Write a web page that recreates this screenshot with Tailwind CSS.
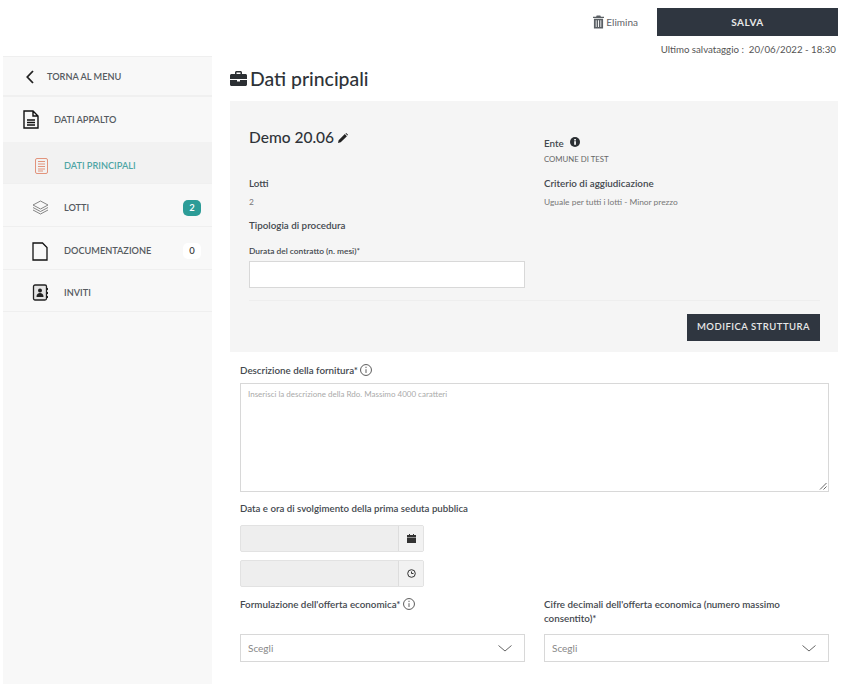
<!DOCTYPE html>
<html lang="it">
<head>
    <meta charset="UTF-8">
    <meta name="viewport" content="width=device-width, initial-scale=1.0">
    <script src="https://cdn.jsdelivr.net/npm/@tailwindcss/browser@4"></script>
    <title>Dati principali</title>
</head>
<body class="bg-white font-['Lato',sans-serif] text-[#3a3f45] h-[684px] overflow-hidden">
    <header class="h-[56px] relative">
        <div class="flex justify-end items-center pt-2 pr-2">
            <div class="flex items-center gap-[2px] mr-[19px] text-[10px] text-[#5f6368]">
                <svg class="w-[11px] h-[14px]" viewBox="0 0 12 14" fill="#5a5f64"><path d="M4 0h4l.6 1.400H12v1.200H0V1.400h3.400zM1 3.400h10V14H1zM3 5v7.500h.9V5zm2.500 0v7.500h1V5zM8.100 5v7.500H9V5z" fill-rule="evenodd"/></svg>
                <span>Elimina</span>
            </div>
            <button class="w-[181px] h-[28px] bg-[#2f3640] text-[#e8e8e8] text-[10px] font-bold tracking-[0.5px]">SALVA</button>
        </div>
        <p class="text-right pr-[10px] mt-[6px] text-[9.7px] text-[#555]">Ultimo salvataggio :&nbsp; 20/06/2022 - 18:30</p>
    </header>

    <div class="flex">
        <aside class="w-[209px] ml-[3px] h-[628px] bg-[#f8f8f8] border-t border-[#efefef] text-[9.2px] font-semibold text-[#555a60] shrink-0">
            <div class="h-[40px] flex items-center pl-[23px] pt-[2px] border-b-2 border-[#f0f0f0]">
                <svg class="w-[8px] h-[14px]" viewBox="0 0 8 14" fill="none" stroke="#222" stroke-width="1.800"><path d="M7 1 1.300 7 7 13"/></svg>
                <span class="ml-[13px]">TORNA AL MENU</span>
            </div>
            <div class="h-[45px] flex items-center pl-[20px]">
                <svg class="w-[16px] h-[19px]" viewBox="0 0 16 19" fill="none" stroke="#111" stroke-width="1.400"><path d="M1 1h9l5 5v12H1zM10 1v5h5M4 10h8M4 12.500h8M4 15h8"/></svg>
                <span class="ml-[15px]">DATI APPALTO</span>
            </div>
            <div class="h-[42px] flex items-center pl-[32px] pt-[6px] bg-[#f2f2f2] border-b border-[#f0f0f0] text-[#4fa5a5]">
                <svg class="w-[13px] h-[16px]" viewBox="0 0 13 16" fill="none" stroke="#e2947c" stroke-width="1"><rect x="0.500" y="0.500" width="12" height="15" rx="1.500"/><path d="M3 3.500h7M3 6h7M3 8.500h7M3 11h7M3 13h5"/></svg>
                <span class="ml-[16px]">DATI PRINCIPALI</span>
            </div>
            <div class="h-[43px] flex items-center pl-[29px] pt-[6px] border-b border-[#efefef]">
                <svg class="w-[17px] h-[16px]" viewBox="0 0 17 16" fill="none" stroke="#777" stroke-width="0.900"><path d="M8.500 1 16 5l-7.500 4L1 5zM1 7.500l7.500 4 7.500-4M1 10l7.500 4 7.500-4"/></svg>
                <span class="ml-[15px]">LOTTI</span>
                <span class="ml-auto mr-[11px] w-[18px] h-[16px] rounded-[5px] bg-[#2c9c97] text-white flex items-center justify-center text-[9.5px]">2</span>
            </div>
            <div class="h-[43px] flex items-center pl-[29px] pt-[6px] border-b border-[#efefef]">
                <svg class="w-[16px] h-[19px]" viewBox="0 0 16 19" fill="none" stroke="#111" stroke-width="1.300"><path d="M1 1h9.500L15 5.500V18H1z"/></svg>
                <span class="ml-[16px]">DOCUMENTAZIONE</span>
                <span class="ml-auto mr-[11px] w-[18px] h-[16px] rounded-[5px] bg-white text-[#444] flex items-center justify-center text-[9.5px]">0</span>
            </div>
            <div class="h-[42px] flex items-center pl-[29px] pt-[4px] border-b border-[#efefef]">
                <svg class="w-[17px] h-[17px]" viewBox="0 0 16 17" fill="none"><rect x="1" y="1" width="13" height="15" rx="1.500" fill="#e4e4e4" stroke="#222" stroke-width="1.300"/><circle cx="7.500" cy="6.500" r="2" fill="#222"/><path d="M4 13c0-3 1.500-4 3.500-4s3.500 1 3.500 4z" fill="#222"/><path d="M15 4v2M15 8v2M15 12v2" stroke="#222"/></svg>
                <span class="ml-[15px]">INVITI</span>
            </div>
        </aside>

        <main class="ml-[18px] w-[608px]">
            <h1 class="h-[45px] flex items-center text-[19.4px] font-medium text-[#2e3338]">
                <svg class="w-[17px] h-[15px] mr-[3px]" viewBox="0 0 17 15" fill="#2b2f33"><path d="M5 3V1.500C5 .7 5.700 0 6.500 0h4c.8 0 1.500.7 1.500 1.500V3h3.500c.8 0 1.500.7 1.500 1.500V8H0V4.500C0 3.700.7 3 1.500 3zm1.500 0h4V1.500h-4zM0 9h7v1.500h3V9h7v4.500c0 .8-.7 1.500-1.500 1.500h-14C.7 15 0 14.300 0 13.500z"/></svg>
                Dati principali
            </h1>

            <section class="bg-[#f5f5f5] h-[251px] pl-[19px] pr-[18px] pt-[28px]">
                <div class="grid grid-cols-[295px_1fr] h-[171px]">
                    <div>
                        <div class="flex items-center gap-[4px] h-[18px] text-[15.5px] font-medium text-[#2e3338]">
                            Demo 20.06
                            <svg class="w-[10px] h-[10px]" viewBox="0 0 11 11" fill="#222"><path d="M0 11l.7-3L7.500 1.200l2.300 2.300L3 10.300zM8.200.5 9 0l2 2-.6.8z"/></svg>
                        </div>
                        <p class="mt-[29px] text-[9.8px] leading-[14px] font-semibold text-[#43484e]">Lotti</p>
                        <p class="mt-[6px] text-[8.4px] leading-[12px] text-[#777]">2</p>
                        <p class="mt-[10px] text-[9.8px] leading-[14px] font-semibold text-[#43484e]">Tipologia di procedura</p>
                        <label class="block mt-[13px] text-[8.4px] leading-[12px] font-semibold text-[#43484e]">Durata del contratto (n. mesi)*</label>
                        <div class="mt-[4px] w-[276px] h-[27px] bg-white border border-[#d8d8d8]"></div>
                    </div>
                    <div class="pt-[7px]">
                        <div class="flex items-center gap-[6px] text-[9.8px] leading-[14px] font-semibold text-[#43484e]">
                            Ente
                            <svg class="w-[10px] h-[10px] -mt-[2px]" viewBox="0 0 10 10"><circle cx="5" cy="5" r="5" fill="#2b2f33"/><rect x="4.200" y="4.200" width="1.700" height="3.600" fill="#fff"/><rect x="4.200" y="2" width="1.700" height="1.500" fill="#fff"/></svg>
                        </div>
                        <p class="mt-[3px] text-[7.8px] leading-[12px] text-[#666]">COMUNE DI TEST</p>
                        <p class="mt-[11px] text-[9.8px] leading-[14px] font-semibold text-[#43484e]">Criterio di aggiudicazione</p>
                        <p class="mt-[6px] text-[8.4px] leading-[12px] text-[#777]">Uguale per tutti i lotti - Minor prezzo</p>
                    </div>
                </div>
                <div class="border-t border-[#eeeeee] flex justify-end pt-[13px]">
                    <button class="w-[133px] h-[27px] bg-[#2f3640] text-[#e8e8e8] text-[9.5px] font-semibold tracking-[0.5px]">MODIFICA STRUTTURA</button>
                </div>
            </section>

            <div class="px-[10px]">
                <label class="flex items-center gap-[2px] h-[14px] mt-[11px] text-[9.8px] font-semibold text-[#43484e]">
                    Descrizione della fornitura*
                    <svg class="w-[12px] h-[12px]" viewBox="0 0 11 11" fill="none" stroke="#444" stroke-width="0.800"><circle cx="5.500" cy="5.500" r="5"/><path d="M5.500 4.800v3.400M5.500 2.500v1.200"/></svg>
                </label>
                <div class="relative mt-[6px] w-[589px] h-[109px] border border-[#d8d8d8] px-[7px] py-[4px] text-[8px] leading-[12px] text-[#aaa]">
                    Inserisci la descrizione della Rdo. Massimo 4000 caratteri
                    <svg class="absolute right-[1px] bottom-[1px] w-[8px] h-[8px]" viewBox="0 0 8 8" stroke="#555" stroke-width="0.900"><path d="M7.500 1 1 7.500M7.500 4.500 4.500 7.500"/></svg>
                </div>

                <p class="mt-[9px] text-[9.7px] leading-[14px] font-semibold text-[#43484e]">Data e ora di svolgimento della prima seduta pubblica</p>
                <div class="mt-[10px] flex w-[184px] h-[27px] bg-[#eeeeee] border border-[#e2e2e2] rounded-[2px]">
                    <div class="flex-1"></div>
                    <div class="w-[25px] bg-[#f2f2f2] border-l border-[#dddddd] flex items-center justify-center">
                        <svg class="w-[9px] h-[9px]" viewBox="0 0 9 9" fill="#333"><path d="M0 1h9v2H0zM0 3.600h9V9H0zM2 0h1v1H2zM6 0h1v1H6z"/></svg>
                    </div>
                </div>
                <div class="mt-[8px] flex w-[184px] h-[27px] bg-[#eeeeee] border border-[#e2e2e2] rounded-[2px]">
                    <div class="flex-1"></div>
                    <div class="w-[25px] bg-[#f2f2f2] border-l border-[#dddddd] flex items-center justify-center">
                        <svg class="w-[9px] h-[9px]" viewBox="0 0 9 9" fill="none" stroke="#333" stroke-width="1"><circle cx="4.500" cy="4.500" r="3.800"/><path d="M4.500 2.500v2h2"/></svg>
                    </div>
                </div>

                <div class="grid grid-cols-[304px_285px] mt-[10px]">
                    <div>
                        <label class="flex items-center gap-[2px] h-[14px] text-[9.8px] font-semibold text-[#43484e]">
                            Formulazione dell'offerta economica*
                            <svg class="w-[12px] h-[12px]" viewBox="0 0 11 11" fill="none" stroke="#444" stroke-width="0.800"><circle cx="5.500" cy="5.500" r="5"/><path d="M5.500 4.800v3.400M5.500 2.500v1.200"/></svg>
                        </label>
                        <div class="mt-[23px] w-[285px] h-[28px] border border-[#d8d8d8] flex items-center justify-between px-[7px] text-[10px] text-[#888]">
                            Scegli
                            <svg class="w-[14px] h-[7px] mr-[5px]" viewBox="0 0 14 7" fill="none" stroke="#666"><path d="M.5.500 7 6 13.500.5"/></svg>
                        </div>
                    </div>
                    <div>
                        <label class="block text-[9.8px] leading-[14px] font-semibold text-[#43484e]">Cifre decimali dell'offerta economica (numero massimo consentito)*</label>
                        <div class="mt-[9px] w-[285px] h-[28px] border border-[#d8d8d8] flex items-center justify-between px-[7px] text-[10px] text-[#888]">
                            Scegli
                            <svg class="w-[14px] h-[7px] mr-[5px]" viewBox="0 0 14 7" fill="none" stroke="#666"><path d="M.5.500 7 6 13.500.5"/></svg>
                        </div>
                    </div>
                </div>
            </div>
        </main>
    </div>
</body>
</html>
